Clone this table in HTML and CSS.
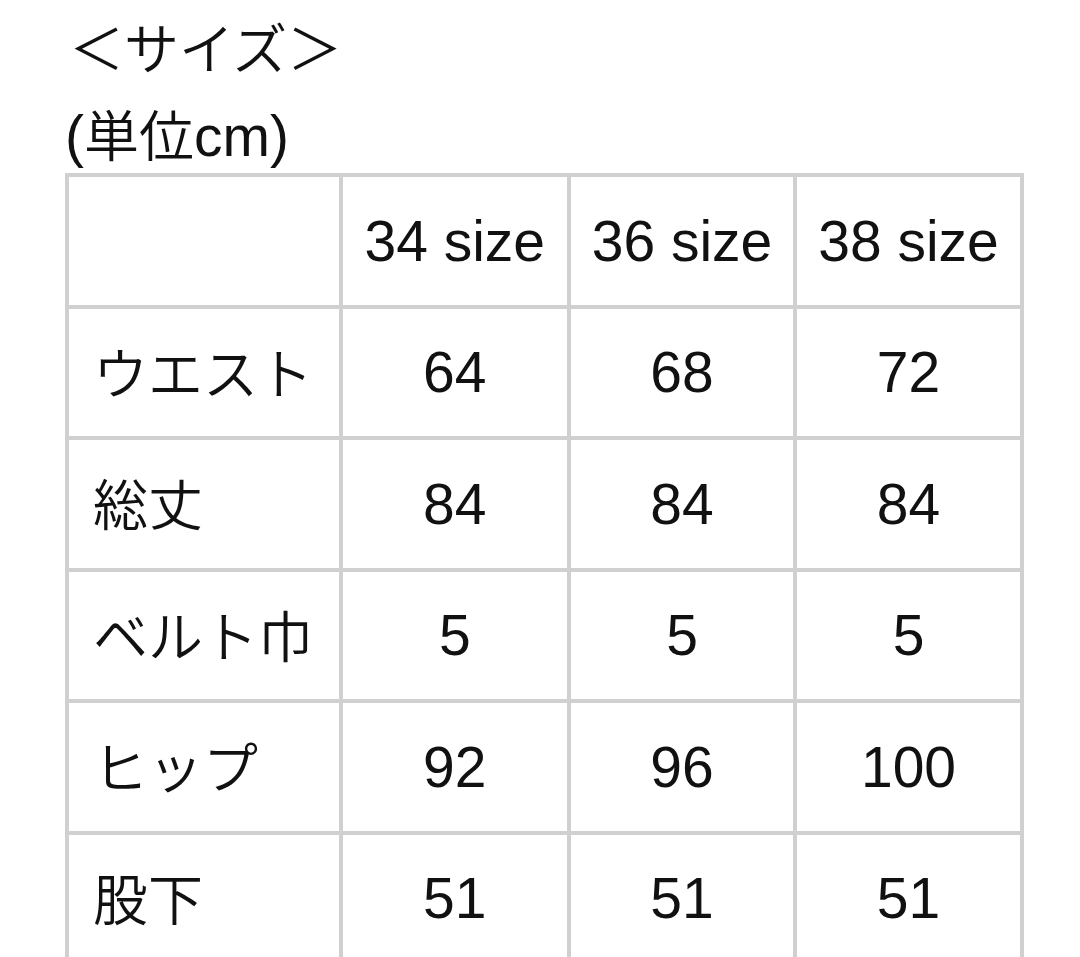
FILE: index.html
```html
<!DOCTYPE html>
<html lang="ja">
<head>
<meta charset="utf-8">
<title>サイズ</title>
<link rel="stylesheet" href="styles.css">
</head>
<body>
<div class="page">
  <div class="title"><span class="ja">＜サイズ＞</span></div>
  <div class="unit">(<span class="ja">単位</span>cm)</div>
  <table class="size-table">
    <colgroup>
      <col class="c-label">
      <col class="c-34">
      <col class="c-36">
      <col class="c-38">
    </colgroup>
    <tr><td class="label"></td><td>34 size</td><td>36 size</td><td>38 size</td></tr>
    <tr><td class="label"><span class="ja">ウエスト</span></td><td>64</td><td>68</td><td>72</td></tr>
    <tr><td class="label"><span class="ja">総丈</span></td><td>84</td><td>84</td><td>84</td></tr>
    <tr><td class="label"><span class="ja">ベルト巾</span></td><td>5</td><td>5</td><td>5</td></tr>
    <tr><td class="label"><span class="ja">ヒップ</span></td><td>92</td><td>96</td><td>100</td></tr>
    <tr><td class="label"><span class="ja">股下</span></td><td>51</td><td>51</td><td>51</td></tr>
  </table>
</div>
</body>
</html>
```
FILE: styles.css
```css
html, body {
  margin: 0;
  padding: 0;
  background: #ffffff;
}
body {
  font-family: "Liberation Sans", "Noto Sans CJK JP", sans-serif;
  color: #111111;
  font-size: 57px;
}
.ja {
  font-family: "Noto Sans CJK JP", sans-serif;
  font-size: 55px;
  font-weight: 350;
}
.page {
  padding: 0 0 0 65px;
  width: 1015px;
  height: 957px;
  overflow: hidden;
}
.title {
  height: 88px;
  line-height: 90px;
  padding-left: 4px;
}
.unit {
  height: 85px;
  line-height: 88px;
}
.size-table {
  border-collapse: collapse;
  table-layout: fixed;
  width: 959px;
}
.c-label { width: 273.5px; }
.c-34 { width: 228.5px; }
.c-36 { width: 226px; }
.c-38 { width: 227px; }
.size-table td {
  border: 4px solid #d0d0d0;
  height: 127.5px;
  padding: 0;
  text-align: center;
  vertical-align: middle;
  line-height: 1.2;
}
.size-table td.label {
  text-align: left;
  padding-left: 24px;
}
```
